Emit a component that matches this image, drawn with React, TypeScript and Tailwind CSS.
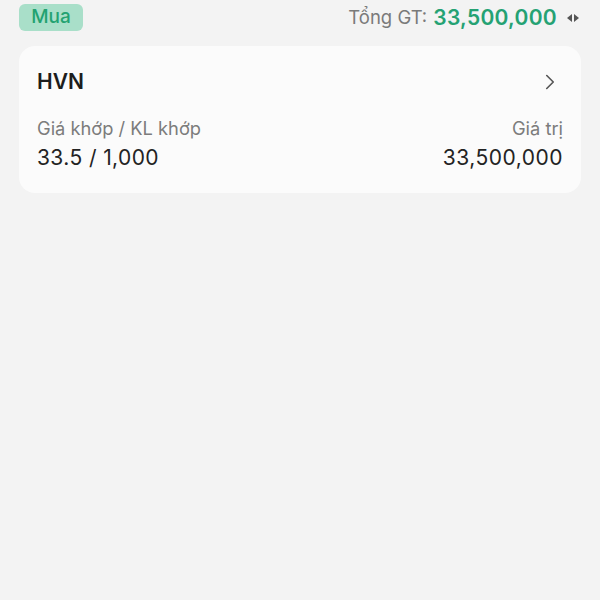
import { ChevronRight } from "lucide-react";

function SortIcon() {
  return (
    <svg viewBox="0 0 14 10" className="h-[10px] w-[14px] text-[#555]" aria-hidden>
      <path d="M6 1 L1 5 L6 9 Z" fill="currentColor" />
      <path d="M8 1 L13 5 L8 9 Z" fill="currentColor" />
    </svg>
  );
}

export default function App() {
  return (
    <div
      className="min-h-[600px] w-[600px] bg-[#f3f3f3] px-[19px] pt-[4px]"
      style={{ fontFamily: "Inter, 'Noto Sans', sans-serif" }}
    >
      <div className="flex h-[27px] items-center justify-between">
        <span className="flex h-[27px] w-[64px] items-center justify-center rounded-[6px] bg-[#a9dfc9] text-[19px] font-medium text-[#23a271]">
          Mua
        </span>
        <div className="flex items-center">
          <span className="text-[18.5px] text-[#7a7a7a]">Tổng GT:</span>
          <span className="ml-[6px] text-[21px] font-semibold tracking-[0.3px] text-[#25a273]">
            33,500,000
          </span>
          <span className="ml-[9px] mr-[1px]">
            <SortIcon />
          </span>
        </div>
      </div>

      <div className="mt-[15px] rounded-[16px] bg-[#fbfbfb] px-[18px] pb-[21px] pt-[22px]">
        <div className="flex h-[28px] items-center justify-between">
          <span className="text-[21px] font-semibold text-[#1d1d1d]">HVN</span>
          <ChevronRight className="size-[26px] text-[#555]" strokeWidth={1.5} />
        </div>
        <div className="mt-[20px] flex justify-between">
          <div className="flex flex-col">
            <span className="text-[18.3px] leading-[24px] text-[#7c7c7c]">Giá khớp / KL khớp</span>
            <span className="mt-[4px] text-[21px] leading-[28px] tracking-[0.4px] text-[#232323]">33.5 / 1,000</span>
          </div>
          <div className="flex flex-col items-end">
            <span className="text-[18.3px] leading-[24px] text-[#7c7c7c]">Giá trị</span>
            <span className="mt-[4px] text-[21px] leading-[28px] tracking-[0.5px] text-[#232323]">33,500,000</span>
          </div>
        </div>
      </div>
    </div>
  );
}
